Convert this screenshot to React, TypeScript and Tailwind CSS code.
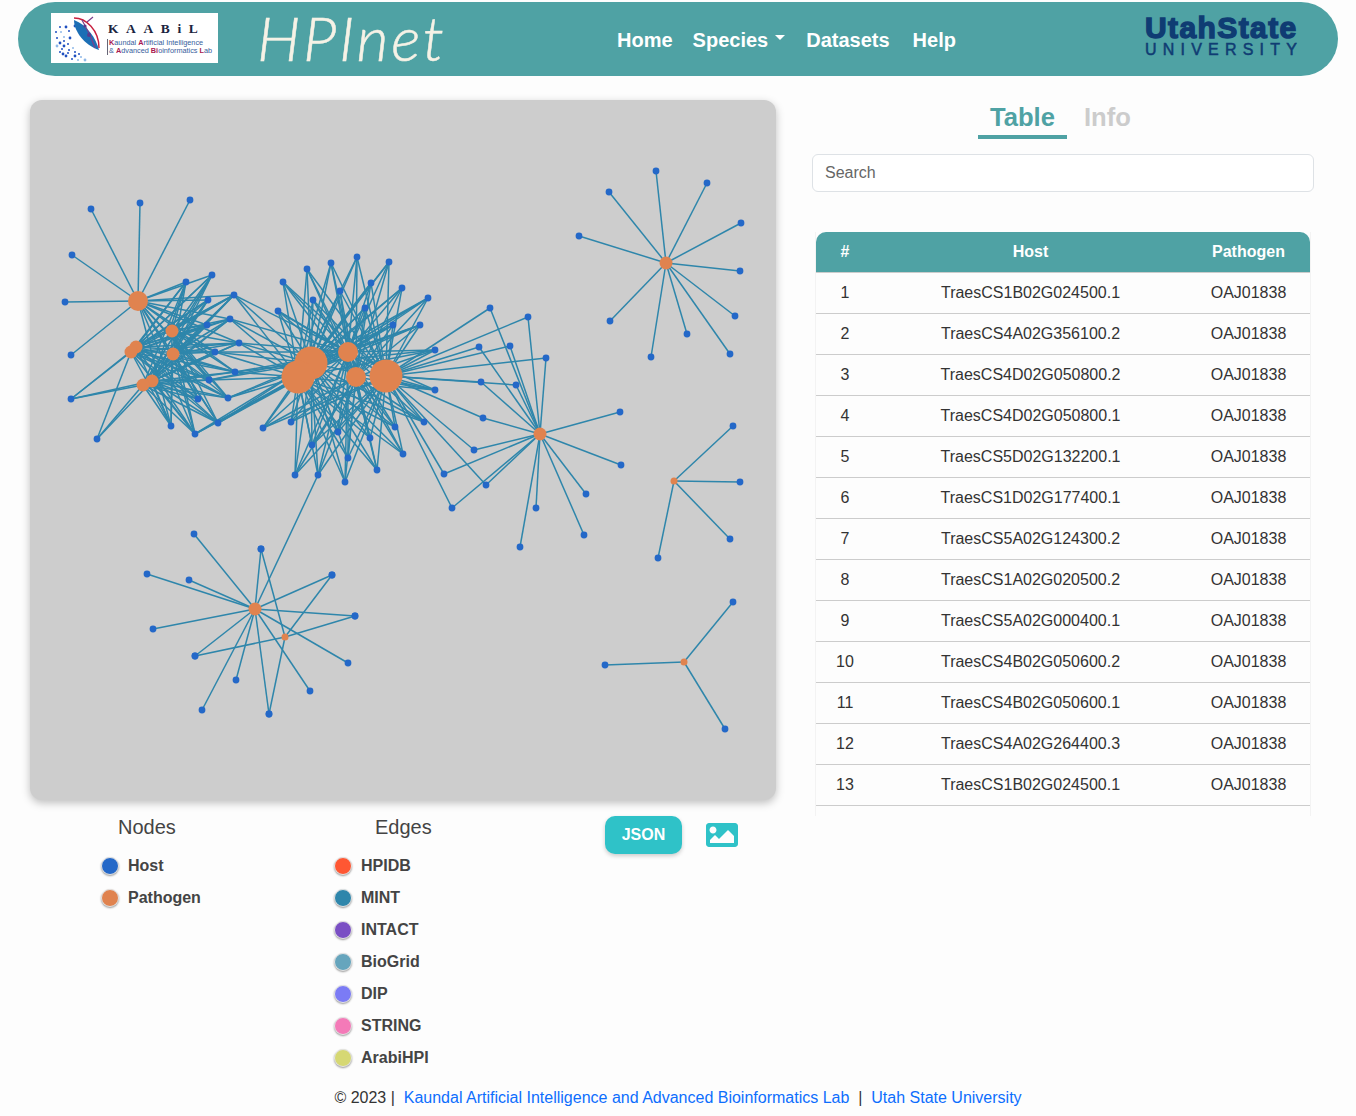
import { FaImage } from 'react-icons/fa';

type Pt = [number, number];

const HOST = '#2468c8';
const PATHOGEN = '#e0834f';
const EDGE = '#2e86ab';

// star shaped components: centre, radius, leaves
const stars: { c: Pt; r: number; leaves: Pt[] }[] = [
  { c: [138, 301], r: 10, leaves: [[91, 209], [140, 203], [190, 200], [72, 255], [65, 302], [71, 355]] },
  { c: [666, 263], r: 6.5, leaves: [[656, 171], [707, 183], [741, 223], [740, 271], [735, 316], [730, 354], [687, 334], [651, 357], [610, 321], [579, 236], [609, 192]] },
  { c: [674, 481], r: 3.5, leaves: [[733, 426], [740, 482], [730, 539], [658, 558]] },
  { c: [684, 662], r: 3.5, leaves: [[733, 602], [605, 665], [725, 729]] },
  { c: [255, 609], r: 6.5, leaves: [[194, 534], [261, 549], [332, 575], [355, 616], [348, 663], [310, 691], [269, 714], [236, 680], [202, 710], [195, 656], [153, 629], [147, 574], [189, 580]] },
  { c: [285, 637], r: 3.5, leaves: [[332, 575], [261, 549], [355, 616], [195, 656], [269, 714]] },
  { c: [540, 434], r: 6.5, leaves: [[620, 412], [621, 465], [586, 494], [584, 535], [536, 508], [520, 547], [490, 308], [528, 317], [479, 347], [510, 346], [546, 358], [481, 382], [516, 385], [483, 418], [474, 450], [444, 474], [486, 485], [452, 508]] },
];

const leftPathogens: Pt[] = [[138, 301], [172, 331], [136, 347], [131, 352], [173, 354], [152, 381], [143, 385]];
const leftHosts: Pt[] = [[186, 282], [212, 275], [234, 295], [208, 300], [230, 319], [207, 325], [239, 343], [215, 352], [235, 372], [209, 380], [228, 398], [198, 399], [171, 426], [195, 434], [218, 423]];
const midPathogens: Pt[] = [[311, 363], [298, 377], [348, 352], [356, 377], [386, 376]];
const midHosts: Pt[] = [[283, 282], [307, 269], [331, 263], [357, 257], [389, 262], [371, 283], [340, 291], [313, 300], [278, 311], [365, 308], [402, 288], [428, 298], [393, 325], [420, 325], [435, 350], [435, 390], [424, 422], [395, 427], [403, 454], [370, 438], [377, 470], [348, 458], [345, 482], [318, 475], [295, 475], [312, 445], [338, 432], [291, 422], [263, 428]];
const rightHosts: Pt[] = [[490, 308], [528, 317], [479, 347], [510, 346], [546, 358], [481, 382], [516, 385], [483, 418], [474, 450], [444, 474], [486, 485], [452, 508]];
const bridgeHosts: Pt[] = [[234, 295], [230, 319], [239, 343], [235, 372], [228, 398], [218, 423], [195, 434], [209, 380], [215, 352]];

const edges: [Pt, Pt][] = [];
stars.forEach((s) => s.leaves.forEach((l) => edges.push([s.c, l])));
leftHosts.forEach((h) => leftPathogens.forEach((p) => edges.push([p, h])));
midHosts.forEach((h) => midPathogens.forEach((p) => edges.push([p, h])));
bridgeHosts.forEach((h) => {
  edges.push([[298, 377], h]);
  edges.push([[311, 363], h]);
  edges.push([[348, 352], h]);
});
rightHosts.forEach((h) => edges.push([[386, 376], h]));
([[131, 352], [136, 347], [143, 385], [152, 381]] as Pt[]).forEach((p) => edges.push([p, [71, 399]]));
([[131, 352], [143, 385], [152, 381]] as Pt[]).forEach((p) => edges.push([p, [97, 439]]));
edges.push([[255, 609], [318, 475]]);

const hostDots: Pt[] = [
  ...stars.flatMap((s) => s.leaves),
  ...leftHosts,
  ...midHosts,
  [71, 399],
  [97, 439],
];

const pathogenDots: { c: Pt; r: number }[] = [
  ...stars.map((s) => ({ c: s.c, r: s.r })),
  { c: [172, 331], r: 6.5 },
  { c: [136, 347], r: 6.5 },
  { c: [131, 352], r: 6.5 },
  { c: [173, 354], r: 6.5 },
  { c: [152, 381], r: 6.5 },
  { c: [143, 385], r: 6.5 },
  { c: [311, 363], r: 16.5 },
  { c: [298, 377], r: 16.5 },
  { c: [348, 352], r: 10 },
  { c: [356, 377], r: 10 },
  { c: [386, 376], r: 16.5 },
];

const rows = [
  'TraesCS1B02G024500.1',
  'TraesCS4A02G356100.2',
  'TraesCS4D02G050800.2',
  'TraesCS4D02G050800.1',
  'TraesCS5D02G132200.1',
  'TraesCS1D02G177400.1',
  'TraesCS5A02G124300.2',
  'TraesCS1A02G020500.2',
  'TraesCS5A02G000400.1',
  'TraesCS4B02G050600.2',
  'TraesCS4B02G050600.1',
  'TraesCS4A02G264400.3',
  'TraesCS1B02G024500.1',
];

const edgeLegend = [
  { name: 'HPIDB', dot: 'bg-[#ff5733]' },
  { name: 'MINT', dot: 'bg-[#2e86ab]' },
  { name: 'INTACT', dot: 'bg-[#7a4fc4]' },
  { name: 'BioGrid', dot: 'bg-[#66a5bd]' },
  { name: 'DIP', dot: 'bg-[#7b7bf5]' },
  { name: 'STRING', dot: 'bg-[#f47ab8]' },
  { name: 'ArabiHPI', dot: 'bg-[#d6d873]' },
];

const logoDots: Pt[] = [[9, 30], [13, 24], [18, 18], [24, 13], [6, 25], [10, 19], [15, 14], [5, 19], [9, 14], [6, 33], [11, 36], [17, 40], [24, 43], [30, 44], [9, 39], [15, 43], [21, 46], [27, 47], [13, 33], [18, 37], [24, 39], [34, 47], [13, 28], [17, 31], [19, 25], [22, 35], [28, 41], [12, 41]];

function LegendItem({ name, dot }: { name: string; dot: string }) {
  return (
    <div className="flex h-8 items-center">
      <span className={`h-[18px] w-[18px] rounded-full border border-[#e4e4e4] shadow-[0_1px_2px_rgba(0,0,0,0.4)] ${dot}`}></span>
      <span className="ml-[9px] text-base font-bold text-[#444]">{name}</span>
    </div>
  );
}

function KaabilLogo() {
  return (
    <div className="mb-[2px] flex h-[50px] w-[167px] shrink-0 bg-white">
      <svg width="56" height="50" viewBox="0 0 56 50" className="shrink-0">
        {logoDots.map(([x, y], i) => (
          <circle key={i} cx={x} cy={y} r={i % 3 === 0 ? 1.4 : 1} fill={i % 4 === 1 ? '#8fb8e8' : '#1f4fc0'} />
        ))}
        <path d="M23 7 C23 18 33 32 48 37 C45 25 36 12 23 7 Z" fill="#1c6fb5" />
        <path d="M23 5 C35 5 48 17 48 35" fill="none" stroke="#c8203f" strokeWidth="1.4" />
        <path d="M31 7 L39 22 M39 22 L44 35 M36 9 L42 4" fill="none" stroke="#7a3f8c" strokeWidth="1.2" />
        <circle cx="38" cy="22" r="2" fill="#5b3a8c" />
        <circle cx="34" cy="13" r="1.6" fill="#5b3a8c" />
      </svg>
      <div className="min-w-0">
        <div className="mt-[8px] whitespace-nowrap pl-[1px] font-['Liberation_Serif',serif] text-[13.5px] leading-[15px] font-bold tracking-[7.6px] text-[#1b2440]">KAABiL</div>
        <div className="mt-[3px] border-l border-[#667] pl-[1px] text-[7.3px] leading-[8px] whitespace-nowrap text-[#35609c]">
          <div><b className="text-[#a8184f]">K</b>aundal <b className="text-[#a8184f]">A</b>rtificial Intelligence</div>
          <div>&amp; <b className="text-[#a8184f]">A</b>dvanced <b className="text-[#a8184f]">Bi</b>oinformatics <b className="text-[#a8184f]">L</b>ab</div>
        </div>
      </div>
    </div>
  );
}

export default function App() {
  return (
    <div className="min-h-[1116px] bg-[#fdfdfd] font-['Liberation_Sans',Arial,sans-serif] text-[#333]">
      {/* Header */}
      <div className="pt-[2px] pr-[18px] pl-[18px]">
        <div className="flex h-[74px] items-center rounded-[37px] bg-[#4fa2a4] pr-[40px] pl-[33px]">
          <KaabilLogo />
          <div className="mb-[5px] ml-[39px] w-[360px] shrink-0 font-['Lato',sans-serif] text-[62px] leading-none font-light tracking-[2.6px] text-[#f6f2e6] italic [-webkit-text-stroke:0.5px_#f6f2e6]">HPInet</div>
          <nav className="mt-[2px] flex items-center text-xl font-bold text-white">
            <a>Home</a>
            <a className="ml-5 flex items-center">
              Species
              <span className="mb-[5px] ml-[7px] h-0 w-0 border-x-[5px] border-t-[5px] border-x-transparent border-t-white"></span>
            </a>
            <a className="ml-[21px]">Datasets</a>
            <a className="ml-[23px]">Help</a>
          </nav>
          <div className="mb-[10px] ml-auto w-[153px] text-[#0f3c73]">
            <div className="text-[30px] leading-[30px] font-bold tracking-[1.4px] whitespace-nowrap [-webkit-text-stroke:1.4px_#0f3c73]">UtahState</div>
            <div className="text-[16px] leading-[13px] tracking-[6.2px] whitespace-nowrap [-webkit-text-stroke:0.5px_#0f3c73]">UNIVERSITY</div>
          </div>
        </div>
      </div>

      {/* Main */}
      <div className="flex items-start pt-6 pl-[30px]">
        <div className="w-[746px] shrink-0">
          <div className="h-[700px] overflow-hidden rounded-xl bg-[#cdcdcd] shadow-[0_3px_8px_rgba(0,0,0,0.25)]">
            <svg width="746" height="700" viewBox="30 100 746 700">
              {edges.map(([a, b], i) => (
                <line key={i} x1={a[0]} y1={a[1]} x2={b[0]} y2={b[1]} stroke={EDGE} strokeWidth="1.5" />
              ))}
              {hostDots.map(([x, y], i) => (
                <circle key={i} cx={x} cy={y} r="3.4" fill={HOST} />
              ))}
              {pathogenDots.map((p, i) => (
                <circle key={i} cx={p.c[0]} cy={p.c[1]} r={p.r} fill={PATHOGEN} />
              ))}
            </svg>
          </div>

          <div className="flex items-start pt-4">
            <div className="ml-[71px] w-[233px] shrink-0">
              <div className="ml-[17px] text-xl leading-[23px] text-[#444]">Nodes</div>
              <div className="mt-[11px]">
                <LegendItem name="Host" dot="bg-[#2468c8]" />
                <LegendItem name="Pathogen" dot="bg-[#e0834f]" />
              </div>
            </div>
            <div className="w-[271px] shrink-0">
              <div className="ml-[41px] text-xl leading-[23px] text-[#444]">Edges</div>
              <div className="mt-[11px]">
                {edgeLegend.map((e) => (
                  <LegendItem key={e.name} name={e.name} dot={e.dot} />
                ))}
              </div>
            </div>
            <button className="h-[38px] w-[77px] shrink-0 rounded-[10px] bg-[#2fc2c8] text-base font-bold text-white shadow-[0_2px_4px_rgba(0,0,0,0.2)]">JSON</button>
            <FaImage className="mt-[3px] ml-6 shrink-0 text-[#2fc2c8]" size={32} />
          </div>
        </div>

        <div className="ml-9 w-[502px] shrink-0">
          <div className="flex h-[39px] pl-[166px]">
            <div className="h-[39px] border-b-4 border-[#4fa2a4] px-3 text-[25.6px] leading-[35px] font-bold text-[#4fa2a4]">Table</div>
            <div className="ml-[17px] text-[25.6px] leading-[35px] font-bold text-[#cccccc]">Info</div>
          </div>
          <div className="mt-[15px] flex h-[38px] items-center rounded-md border border-[#dee2e6] bg-white px-3 text-base text-[#666]">Search</div>
          <div className="mt-10 ml-[3px] h-[584px] w-[496px] overflow-hidden border-x border-[#f3f3f3]">
            <table className="w-full table-fixed border-collapse text-center text-base">
              <thead>
                <tr className="h-[40px] font-bold text-white">
                  <th className="w-[58px] rounded-tl-[10px] border-b border-[#cccccc] bg-[#4fa2a4]">#</th>
                  <th className="w-[313px] border-b border-[#cccccc] bg-[#4fa2a4]">Host</th>
                  <th className="rounded-tr-[10px] border-b border-[#cccccc] bg-[#4fa2a4]">Pathogen</th>
                </tr>
              </thead>
              <tbody>
                {rows.map((host, i) => (
                  <tr key={i} className="h-[41px] border-b border-[#cccccc] bg-[#fdfdfd]">
                    <td>{i + 1}</td>
                    <td>{host}</td>
                    <td>OAJ01838</td>
                  </tr>
                ))}
              </tbody>
            </table>
          </div>
        </div>
      </div>

      {/* Footer */}
      <div className="mt-3 text-center text-base leading-6">
        © 2023 |&nbsp; <a className="text-[#0d6efd]">Kaundal Artificial Intelligence and Advanced Bioinformatics Lab</a>
        &nbsp; |&nbsp; <a className="text-[#0d6efd]">Utah State University</a>
      </div>
    </div>
  );
}
